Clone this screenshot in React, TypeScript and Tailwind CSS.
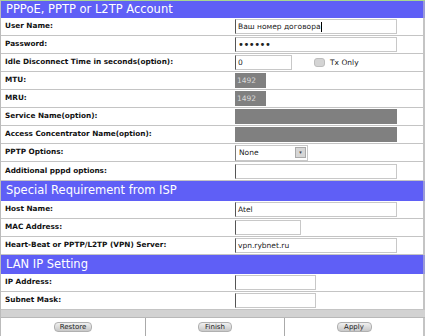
import React from "react";

function Header(props: { title: string; h: string }) {
  return (
    <div className={`flex items-center bg-[#5f5ff6] pl-[5px] text-white text-[11.5px] border-r-2 border-[#9a9ad8] ${props.h}`}>
      {props.title}
    </div>
  );
}

function Row(props: { label: string; h?: string; children?: React.ReactNode }) {
  return (
    <div className={`flex border-b border-[#c4c4c4] bg-white ${props.h ?? "h-[18px]"}`}>
      <div className="w-[233px] flex items-center pl-[4px] font-bold text-[7.3px] text-[#111]">
        {props.label}
      </div>
      <div className="flex-1 flex items-center pl-[1px] border-r-2 border-[#c4c4c4]">{props.children}</div>
    </div>
  );
}

function Input(props: { w: string; value?: string; caret?: boolean; dots?: boolean }) {
  return (
    <div
      className={`h-[15px] flex items-center pl-[2px] bg-white border border-[#c8c8c8] border-l-[#555] text-[#222] ${props.dots ? "text-[10px] tracking-[-0.5px]" : "text-[7.5px]"} ${props.w}`}
    >
      {props.value}
      {props.caret && <span className="w-px h-[10px] bg-black" />}
    </div>
  );
}

function Gray(props: { w: string; value?: string }) {
  return (
    <div className={`h-[15px] flex items-center pl-[2px] bg-[#808080] text-[7.5px] text-[#d8d8d8] ${props.w}`}>
      {props.value}
    </div>
  );
}

function Btn(props: { label: string; w: string }) {
  return (
    <div
      className={`h-[10px] flex items-center justify-center rounded-[4px] bg-gradient-to-b from-[#f0f0f0] to-[#c8c8c8] border border-[#b0b0b0] text-[7px] text-[#222] ${props.w}`}
    >
      {props.label}
    </div>
  );
}

export default function App() {
  return (
    <div className="w-[425px] h-[336px] overflow-hidden bg-white border-l border-[#bbb]" style={{ fontFamily: '"DejaVu Sans", Verdana, sans-serif' }}>
      <div className="h-px bg-[#a8d890]" />
      <Header title="PPPoE, PPTP or L2TP Account" h="h-[17px]" />
      <Row label="User Name:">
        <Input w="w-[162px]" value="Ваш номер договора" caret />
      </Row>
      <Row label="Password:">
        <Input w="w-[162px]" value="••••••" dots />
      </Row>
      <Row label="Idle Disconnect Time in seconds(option):">
        <Input w="w-[57px]" value="0" />
        <div className="ml-[22px] w-[11px] h-[9px] rounded-[3px] bg-[#d4d4d4] border border-[#bdbdbd]" />
        <span className="ml-[5px] text-[7.5px] text-[#222]">Tx Only</span>
      </Row>
      <Row label="MTU:">
        <Gray w="w-[31px]" value="1492" />
      </Row>
      <Row label="MRU:">
        <Gray w="w-[31px]" value="1492" />
      </Row>
      <Row label="Service Name(option):">
        <Gray w="w-[162px]" />
      </Row>
      <Row label="Access Concentrator Name(option):">
        <Gray w="w-[162px]" />
      </Row>
      <Row label="PPTP Options:">
        <div className="w-[73px] h-[16px] flex items-center justify-between pl-[3px] pr-[1px] bg-white border border-[#c8c8c8] border-l-[#777] text-[7.5px] text-[#222]">
          None
          <div className="w-[11px] h-[11px] flex items-center justify-center bg-[#d6d6d6] border border-[#aaa] text-[5px] text-[#444]">
            ▾
          </div>
        </div>
      </Row>
      <Row label="Additional pppd options:" h="h-[19px]">
        <Input w="w-[162px]" />
      </Row>
      <Header title="Special Requirement from ISP" h="h-[20px]" />
      <Row label="Host Name:">
        <Input w="w-[162px]" value="Atel" />
      </Row>
      <Row label="MAC Address:">
        <Input w="w-[66px]" />
      </Row>
      <Row label="Heart-Beat or PPTP/L2TP (VPN) Server:">
        <Input w="w-[162px]" value="vpn.rybnet.ru" />
      </Row>
      <Header title="LAN IP Setting" h="h-[19px]" />
      <Row label="IP Address:">
        <Input w="w-[81px]" />
      </Row>
      <Row label="Subnet Mask:">
        <Input w="w-[81px]" />
      </Row>
      <div className="h-[8px] bg-[#d2d2d2] border-b border-[#b8b8b8]" />
      <div className="flex h-[18px] bg-white">
        <div className="w-[145px] flex items-center justify-center border-r border-[#aaa]">
          <Btn label="Restore" w="w-[38px]" />
        </div>
        <div className="w-[139px] flex items-center justify-center border-r border-[#aaa]">
          <Btn label="Finish" w="w-[34px]" />
        </div>
        <div className="flex-1 flex items-center justify-center border-r-2 border-[#c4c4c4]">
          <Btn label="Apply" w="w-[35px]" />
        </div>
      </div>
    </div>
  );
}
